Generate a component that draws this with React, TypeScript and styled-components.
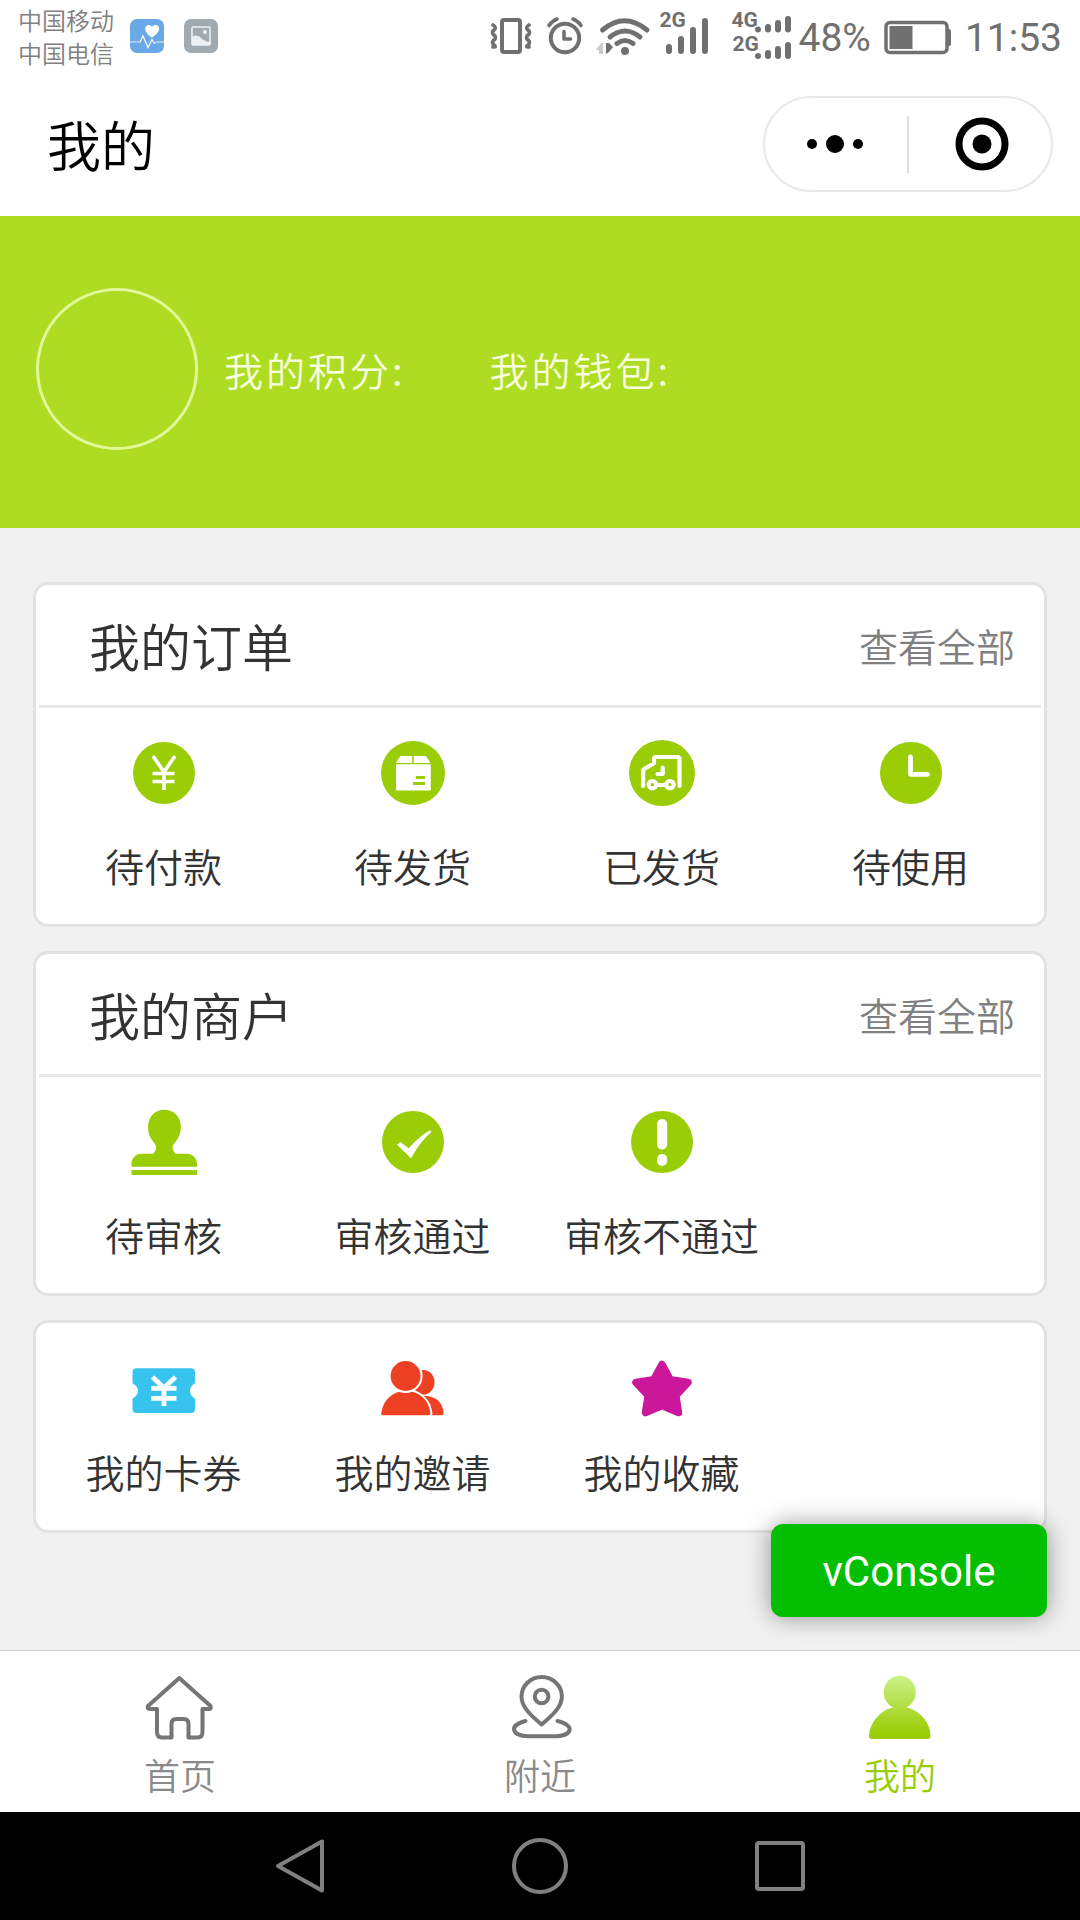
import React from "react";
import styled, { createGlobalStyle } from "styled-components";

const GREEN = "#9acd05";
const GREY = "#707070";
const LATIN = `Roboto, "Noto Sans CJK SC", sans-serif`;

const GlobalStyle = createGlobalStyle`
  * { box-sizing: border-box; }
  body {
    margin: 0;
    background: #f1f1f1;
    font-family: "Noto Sans CJK SC", Roboto, sans-serif;
    font-weight: 350;
    color: #333;
  }
  button {
    margin: 0;
    padding: 0;
    border: 0;
    background: none;
    font: inherit;
    color: inherit;
    cursor: pointer;
  }
  a { color: inherit; text-decoration: none; }
  svg { display: block; flex: none; }
`;

const Page = styled.div`
  display: flex;
  flex-direction: column;
  min-height: 100vh;
`;

/* ---------- status bar ---------- */

const StatusBar = styled.div`
  display: flex;
  align-items: center;
  height: 72px;
  padding: 0 18px;
  background: #fff;
  color: ${GREY};
`;

const Carriers = styled.div`
  font-size: 24px;
  line-height: 33px;
  color: #808080;
`;

const AppIcons = styled.div`
  display: flex;
  gap: 20px;
  margin-left: 16px;
`;

const StatusIcons = styled.div`
  display: flex;
  align-items: center;
  margin-left: auto;
  font-family: ${LATIN};
`;

const StatusText = styled.span`
  padding-top: 3px;
  padding-left: 4px;
  padding-right: ${(p: { $end?: boolean }) => (p.$end ? 0 : 4)}px;
  font-size: 39px;
  font-weight: 400;
  line-height: 72px;
`;

const Signal = styled.div`
  position: relative;
`;

const NetLabel = styled.span<{ $left: number; $top: number }>`
  position: absolute;
  left: ${(p) => p.$left}px;
  top: ${(p) => p.$top}px;
  font-size: 21px;
  font-weight: 700;
  line-height: 20px;
`;

/* ---------- title bar ---------- */

const TitleBar = styled.header`
  display: flex;
  align-items: center;
  justify-content: space-between;
  height: 144px;
  padding: 0 27px 0 47px;
  background: #fff;
`;

const PageTitle = styled.h1`
  margin: 0;
  font-size: 54px;
  font-weight: inherit;
  line-height: 80px;
  color: #000;
`;

const Capsule = styled.div`
  display: flex;
  align-items: center;
  width: 290px;
  height: 96px;
  border: 2px solid #e8e8e8;
  border-radius: 48px;
`;

const CapsuleButton = styled.button`
  display: flex;
  flex: 1;
  align-items: center;
  justify-content: center;
  height: 100%;
`;

const CapsuleLine = styled.span`
  width: 2px;
  height: 57px;
  background: #dedede;
`;

/* ---------- profile ---------- */

const Profile = styled.section`
  display: flex;
  align-items: center;
  padding: 72px 36px 78px;
  background: #addc22;
`;

const Avatar = styled.div`
  width: 162px;
  height: 162px;
  margin-right: 26px;
  border: 3px solid #e2f89a;
  border-radius: 50%;
`;

const Stats = styled.div`
  display: flex;
  gap: 84px;
  font-size: 39px;
  line-height: 58px;
  letter-spacing: 3px;
  color: #f7ffdc;
`;

/* ---------- cards ---------- */

const Main = styled.main`
  position: relative;
  display: flex;
  flex: 1;
  flex-direction: column;
  gap: 24px;
  padding: 54px 33px 117px;
`;

const Card = styled.section`
  border: 3px solid #e2e2e2;
  border-radius: 15px;
  background: #fff;
`;

const CardHead = styled.div`
  display: flex;
  align-items: center;
  justify-content: space-between;
  height: 123px;
  margin: 0 3px;
  padding: 0 26px 0 50px;
  border-bottom: 3px solid #e8e8e8;
`;

const CardTitle = styled.h2`
  margin: 0;
  font-size: 51px;
  font-weight: inherit;
  line-height: 76px;
`;

const MoreLink = styled.a`
  font-size: 39px;
  line-height: 58px;
  color: #808080;
`;

const Grid = styled.div<{ $compact?: boolean }>`
  display: grid;
  grid-template-columns: repeat(4, 1fr);
  padding: ${(p) => (p.$compact ? "34px 9px 32px 3px" : "32px 9px 32px 3px")};
`;

const Entry = styled.button<{ $compact?: boolean }>`
  display: flex;
  flex-direction: column;
  align-items: center;
  gap: ${(p) => (p.$compact ? 21 : 32)}px;
  font-size: 39px;
  line-height: 54px;
  white-space: nowrap;
`;

const ConsoleButton = styled.button`
  position: absolute;
  right: 33px;
  bottom: 33px;
  width: 276px;
  height: 93px;
  padding-top: 3px;
  border-radius: 12px;
  background: #04be02;
  box-shadow: 0 0 24px rgba(0, 0, 0, 0.4);
  color: #fff;
  font-family: ${LATIN};
  font-size: 42px;
  font-weight: 400;
  line-height: 90px;
`;

/* ---------- bottom bars ---------- */

const TabBar = styled.nav`
  display: grid;
  grid-template-columns: repeat(3, 1fr);
  height: 162px;
  padding-top: 20px;
  border-top: 1px solid #cfcfcf;
  background: #fff;
`;

const Tab = styled.a<{ $active?: boolean }>`
  display: flex;
  flex-direction: column;
  align-items: center;
  gap: 6px;
  font-size: 36px;
  line-height: 50px;
  color: ${(p) => (p.$active ? GREEN : "#8a8a8a")};
`;

const SystemNav = styled.div`
  display: grid;
  grid-template-columns: repeat(3, 1fr);
  height: 108px;
  padding: 0 calc(100% / 6);
  background: #000;
`;

const SystemKey = styled.button`
  display: flex;
  align-items: center;
  justify-content: center;
`;

/* ---------- icons ---------- */

const Icon = ({ children }: { children: React.ReactNode }) => (
  <svg width="66" height="66" viewBox="0 0 66 66" fill="none" aria-hidden="true">
    {children}
  </svg>
);

const YenIcon = () => (
  <Icon>
    <circle cx="33" cy="33" r="31" fill={GREEN} />
    <path d="M22 16 33 32 44 16M21.500 33.500h22M21.500 41.500h22M33 31v19" stroke="#fff" strokeWidth="3.600" />
  </Icon>
);

const ParcelIcon = () => (
  <Icon>
    <circle cx="33" cy="33" r="32" fill={GREEN} />
    <path d="M20.500 16h11.600v7H16q2-4 4.500-7ZM33.700 16h12q3 3 4.600 7H33.700Z" fill="#fff" />
    <rect x="16" y="24.300" width="34.800" height="26.200" rx="1" fill="#fff" />
    <path d="M36 37.500h9M33 43.600h12" stroke={GREEN} strokeWidth="3" />
  </Icon>
);

const TruckIcon = () => (
  <Icon>
    <circle cx="33" cy="33" r="33" fill={GREEN} />
    <g stroke="#fff" strokeWidth="4.200" strokeLinecap="round" strokeLinejoin="round">
      <path d="M14.100 46V31q0-1.500 1.500-2.300L25 23.300V19q0-2 2-2h21.500q2 0 2 2V46" />
      <path d="M33.700 27.500V34H28.500M28 45h9" />
      <circle cx="23.400" cy="44.700" r="3.700" />
      <circle cx="41" cy="44.700" r="3.700" />
    </g>
  </Icon>
);

const ClockIcon = () => (
  <Icon>
    <circle cx="33" cy="33" r="31" fill={GREEN} />
    <path d="M32.500 17v17.300H49.500" stroke="#fff" strokeWidth="4.800" strokeLinecap="round" strokeLinejoin="round" />
  </Icon>
);

const StampIcon = () => (
  <Icon>
    <path
      d="M33.400.7c9.400 0 16.500 7 16.500 17 0 6-2 11-5 14.500-4 5-4.500 7-.5 12.500H56c5.500 0 10 4.500 10 10v3H.5v-3c0-5.500 4.500-10 10-10h11.900c4-5.500 3.500-7.500-.5-12.500-3-3.500-4.900-8.500-4.900-14.500 0-10 7-17 16.400-17Z"
      fill={GREEN}
    />
    <rect x=".5" y="61" width="65.500" height="5" fill={GREEN} />
  </Icon>
);

const PassIcon = () => (
  <Icon>
    <circle cx="33" cy="33" r="31" fill={GREEN} />
    <path d="M17 35.700 20.400 33l8.300 6.300Q40 26.500 50 21.300l1.400 1.700Q40 32.500 31.100 49.300Z" fill="#fff" />
  </Icon>
);

const FailIcon = () => (
  <Icon>
    <circle cx="33" cy="33" r="31" fill={GREEN} />
    <rect x="28" y="10" width="10.200" height="30.500" rx="5" fill="#fff" />
    <rect x="28" y="45" width="10.200" height="12" rx="5" fill="#fff" />
  </Icon>
);

const TicketIcon = () => (
  <Icon>
    <path
      d="M5.500 11.300h54.500q4 0 4 4V26.300q-5 3-5 7.700t5 7.700V52q0 4-4 4H5.500q-4 0-4-4V41.700q5.500-3 5.500-7.700t-5.500-7.700V15.300q0-4 4-4Z"
      fill="#36c4ee"
    />
    <path d="M21.500 20 33 31 44.500 20M20.300 31.300h25.200M20.300 41.300h25.200M33 29v20" stroke="#fff" strokeWidth="4.800" />
  </Icon>
);

const FriendsIcon = () => (
  <Icon>
    <ellipse cx="43.500" cy="25.200" rx="11" ry="12.300" fill="#ed4123" />
    <path d="M38 39q24-2 25.600 17 0 2.300-2 2.300H38Z" fill="#ed4123" />
    <g fill="#ed4123" stroke="#fff" strokeWidth="2">
      <path d="M25.600 33C40 33 50 43 51.400 56q0 3.300-3 3.300H3Q0 59.300.2 56C2 43 12 33 25.600 33Z" />
      <circle cx="25.600" cy="19" r="16" />
    </g>
  </Icon>
);

const StarIcon = () => (
  <Icon>
    <path
      d="M33 7.500 41.300 22.700 59 25.500 46.800 38.500 49.500 55.500 33 48.500 16.500 55.500 19.200 38.500 7 25.500 24.700 22.700Z"
      fill="#cb1799"
      stroke="#cb1799"
      strokeWidth="7.500"
      strokeLinejoin="round"
    />
  </Icon>
);

const TabIcon = ({ children }: { children: React.ReactNode }) => (
  <svg
    width="72"
    height="72"
    viewBox="0 0 72 72"
    fill="none"
    stroke="#757575"
    strokeWidth="4"
    strokeLinecap="round"
    strokeLinejoin="round"
    aria-hidden="true"
  >
    {children}
  </svg>
);

const HomeIcon = () => (
  <TabIcon>
    <path d="M35.300 7 66.500 35q.8 3-1.500 3H58.500V61q0 5.500-5 5.500H44.500V53q0-5-5-5h-7q-5 0-5 5V66.500H18q-5 0-5-5.500V38H6q-3.500 0-2-3Z" />
  </TabIcon>
);

const NearbyIcon = () => (
  <TabIcon>
    <path d="M37.600 53.500C25 43 17.500 35 17.500 25.500a20.200 19.500 0 0 1 40.400 0C58 35 50 43 37.600 53.500Z" />
    <circle cx="37.600" cy="25.500" r="6.800" />
    <path d="M21.500 50C4 54.500 8 65 24 65.300H51C68 65 72 54.500 53.500 50" />
  </TabIcon>
);

const MineIcon = () => (
  <svg width="72" height="72" viewBox="0 0 72 72" aria-hidden="true">
    <defs>
      <linearGradient id="mine" x1="0" y1="4" x2="0" y2="62" gradientUnits="userSpaceOnUse">
        <stop offset="0" stopColor="#ccf28c" />
        <stop offset="1" stopColor="#9acd05" />
      </linearGradient>
    </defs>
    <g fill="url(#mine)">
      <ellipse cx="35.700" cy="21.300" rx="16" ry="16.600" />
      <path d="M28 36.500h15.400C57 40.500 66 51.500 66.500 64.500q0 3.600-3 3.600H8q-3 0-3-3.600C6 51.500 15 40.500 28 36.500Z" />
    </g>
  </svg>
);

const HealthAppIcon = () => (
  <svg width="34" height="34" viewBox="0 0 34 34" fill="none" aria-hidden="true">
    <rect width="34" height="34" rx="7" fill="#6aa8e8" />
    <path d="M0 23h9M26 23h8" stroke="#b9d6f4" strokeWidth="1.600" />
    <path d="M9 23h1l3-6 5 11.500 4-8 2 3.500h2" stroke="#fff" strokeWidth="1.200" />
    <path d="M22 18.500c-10-6-7-13-3-12.500q2 0 3 2 1-2 3-2c5-.5 7 6.500-3 12.500Z" fill="#fff" />
  </svg>
);

const GalleryAppIcon = () => (
  <svg width="34" height="34" viewBox="0 0 34 34" fill="none" aria-hidden="true">
    <rect width="34" height="34" rx="7" fill="#a0aab0" />
    <rect x="8" y="8" width="18" height="18" rx="1" stroke="#edf1f3" strokeWidth="1.600" />
    <circle cx="21" cy="13" r="2" fill="#edf1f3" />
    <path d="M8 18q4-3 8 0 4 4.500 10 5v3H8Z" fill="#edf1f3" />
  </svg>
);

const VibrateIcon = () => (
  <svg width="56" height="72" viewBox="0 0 56 72" fill="none" stroke={GREY} strokeWidth="4" strokeLinecap="round" aria-hidden="true">
    <rect x="20" y="20" width="18" height="32" rx="2" />
    <path
      d="M11 25q4 2.500 1 5t0 5 0 5 0 5-1 2M47 25q-4 2.500-1 5t0 5 0 5 0 5 1 2"
      strokeWidth="3.600"
    />
  </svg>
);

const AlarmIcon = () => (
  <svg width="50" height="72" viewBox="0 0 50 72" fill="none" stroke={GREY} strokeWidth="4" strokeLinecap="round" strokeLinejoin="round" aria-hidden="true">
    <circle cx="27" cy="38" r="14.200" />
    <path d="M26 31.500v7.500h6.500" strokeWidth="3.600" />
    <path d="M11 25.500q3-4.500 8-6.500M43 25.500q-3-4.500-8-6.500" strokeWidth="3.600" />
  </svg>
);

const WifiIcon = () => (
  <svg width="66" height="72" viewBox="0 0 66 72" fill="none" stroke={GREY} strokeWidth="5" strokeLinecap="round" aria-hidden="true">
    <path d="M14.500 30q22-18.500 44.500 0M22 37q15-12 30 0M29 43.500q8-6 16 0" />
    <circle cx="37" cy="51" r="4" fill={GREY} stroke="none" />
    <path d="m7.500 50 6-7H15v11h-4v-4Z" fill="#ccc" stroke="none" />
    <path d="M18 43h3l4 4-4 5-3 2Z" fill={GREY} stroke="none" />
  </svg>
);

const BatteryIcon = () => (
  <svg width="86" height="72" viewBox="0 0 86 72" fill="none" aria-hidden="true">
    <rect x="11" y="22.500" width="61" height="30" rx="4" stroke={GREY} strokeWidth="3.500" />
    <path d="M14.500 26h23v23h-23Z" fill={GREY} />
    <path d="M73 29h1q2 0 2 3v12q0 2-2 2h-1Z" fill={GREY} />
  </svg>
);

const orders = [
  { label: "待付款", icon: <YenIcon /> },
  { label: "待发货", icon: <ParcelIcon /> },
  { label: "已发货", icon: <TruckIcon /> },
  { label: "待使用", icon: <ClockIcon /> },
];

const merchants = [
  { label: "待审核", icon: <StampIcon /> },
  { label: "审核通过", icon: <PassIcon /> },
  { label: "审核不通过", icon: <FailIcon /> },
];

const extras = [
  { label: "我的卡券", icon: <TicketIcon /> },
  { label: "我的邀请", icon: <FriendsIcon /> },
  { label: "我的收藏", icon: <StarIcon /> },
];

type Item = { label: string; icon: React.ReactNode };

const EntryCard = ({ title, items }: { title?: string; items: Item[] }) => (
  <Card>
    {title && (
      <CardHead>
        <CardTitle>{title}</CardTitle>
        <MoreLink href="#">查看全部</MoreLink>
      </CardHead>
    )}
    <Grid $compact={!title}>
      {items.map((item) => (
        <Entry key={item.label} type="button" $compact={!title}>
          {item.icon}
          {item.label}
        </Entry>
      ))}
    </Grid>
  </Card>
);

export default function App() {
  return (
    <Page>
      <GlobalStyle />
      <StatusBar>
        <Carriers>
          <div>中国移动</div>
          <div>中国电信</div>
        </Carriers>
        <AppIcons>
          <HealthAppIcon />
          <GalleryAppIcon />
        </AppIcons>
        <StatusIcons>
          <VibrateIcon />
          <AlarmIcon />
          <WifiIcon />
          <Signal>
            <NetLabel $left={5} $top={10}>2G</NetLabel>
            <svg width="64" height="72" viewBox="0 0 64 72" stroke={GREY} strokeWidth="6" strokeLinecap="round" aria-hidden="true">
              <path d="M15 47v4M27 39v12M39 30v21M51 21v30" />
            </svg>
          </Signal>
          <Signal>
            <NetLabel $left={13} $top={10}>4G</NetLabel>
            <NetLabel $left={14} $top={34}>2G</NetLabel>
            <svg width="76" height="72" viewBox="0 0 76 72" stroke={GREY} strokeWidth="6" strokeLinecap="round" aria-hidden="true">
              <path d="M40 29.500v.1M50 27v2.500M60 23v6.500M70 19v10.500M40 56v.1M50 53v3M60 49v7M70 45v11" />
            </svg>
          </Signal>
          <StatusText>48%</StatusText>
          <BatteryIcon />
          <StatusText $end>11:53</StatusText>
        </StatusIcons>
      </StatusBar>

      <TitleBar>
        <PageTitle>我的</PageTitle>
        <Capsule>
          <CapsuleButton type="button" aria-label="更多">
            <svg width="58" height="20" viewBox="1 0 58 20" aria-hidden="true">
              <circle cx="6" cy="10" r="5" />
              <circle cx="29" cy="10" r="9" />
              <circle cx="52" cy="10" r="5" />
            </svg>
          </CapsuleButton>
          <CapsuleLine />
          <CapsuleButton type="button" aria-label="关闭">
            <svg width="60" height="54" viewBox="-5 0 60 54" aria-hidden="true">
              <circle cx="27" cy="27" r="23" fill="none" stroke="#000" strokeWidth="7" />
              <circle cx="27" cy="27" r="9.500" />
            </svg>
          </CapsuleButton>
        </Capsule>
      </TitleBar>

      <Profile>
        <Avatar />
        <Stats>
          <span>我的积分:</span>
          <span>我的钱包:</span>
        </Stats>
      </Profile>

      <Main>
        <EntryCard title="我的订单" items={orders} />
        <EntryCard title="我的商户" items={merchants} />
        <EntryCard items={extras} />
        <ConsoleButton type="button">vConsole</ConsoleButton>
      </Main>

      <TabBar>
        <Tab href="#home">
          <HomeIcon />
          首页
        </Tab>
        <Tab href="#nearby">
          <NearbyIcon />
          附近
        </Tab>
        <Tab href="#mine" $active>
          <MineIcon />
          我的
        </Tab>
      </TabBar>

      <SystemNav>
        <SystemKey type="button" aria-label="返回">
          <svg width="56" height="56" viewBox="0 0 56 56" fill="none" stroke="#808080" strokeWidth="4" strokeLinejoin="round" aria-hidden="true">
            <path d="M50 3.500V52.500L6 28Z" />
          </svg>
        </SystemKey>
        <SystemKey type="button" aria-label="主屏幕">
          <svg width="56" height="56" viewBox="0 0 56 56" fill="none" stroke="#808080" strokeWidth="4" aria-hidden="true">
            <circle cx="28" cy="28" r="26" />
          </svg>
        </SystemKey>
        <SystemKey type="button" aria-label="最近任务">
          <svg width="56" height="56" viewBox="0 0 56 56" fill="none" stroke="#808080" strokeWidth="4" aria-hidden="true">
            <rect x="5" y="5" width="46" height="46" rx="2" />
          </svg>
        </SystemKey>
      </SystemNav>
    </Page>
  );
}
